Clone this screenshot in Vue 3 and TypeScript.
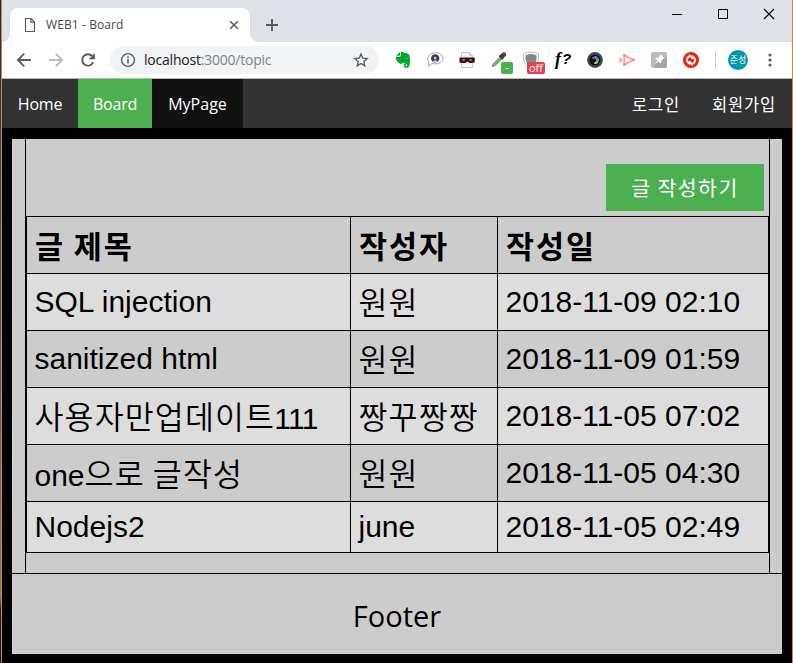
<script setup lang="ts">
interface Piece {
  text: string
  ko: boolean
}

interface Post {
  title: string
  author: string
  date: string
}

const headers: string[] = ['글 제목', '작성자', '작성일']

const posts: Post[] = [
  { title: 'SQL injection', author: '원원', date: '2018-11-09 02:10' },
  { title: 'sanitized html', author: '원원', date: '2018-11-09 01:59' },
  { title: '사용자만업데이트111', author: '짱꾸짱짱', date: '2018-11-05 07:02' },
  { title: 'one으로 글작성', author: '원원', date: '2018-11-05 04:30' },
  { title: 'Nodejs2', author: 'june', date: '2018-11-05 02:49' },
]

// Splits a string into Hangul and Latin runs so each can carry its own font metrics.
function pieces(text: string): Piece[] {
  const runs = text.match(/[가-힣]+(?: [가-힣]+)*|[^가-힣]+/g) ?? []
  return runs.map((run) => ({ text: run, ko: /[가-힣]/.test(run) }))
}

function hasHangul(post: Post): boolean {
  return /[가-힣]/.test(post.title + post.author)
}
</script>

<template>
  <div class="window">
    <div class="tabstrip">
      <div class="tab">
        <svg class="doc" width="12" height="16" viewBox="0 0 12 16">
          <path d="M1.5 1.5h5.6l3.4 3.4v9.6h-9z M6.8 1.5v3.7h3.7" fill="none" stroke="#5a5d61" stroke-width="1.2" />
        </svg>
        <span class="tab-title">WEB1 - Board</span>
        <svg class="tab-close" width="10" height="10" viewBox="0 0 10 10">
          <path d="M1.2 1.2l7.6 7.6M8.8 1.2L1.2 8.8" stroke="#5a5d61" stroke-width="1.6" />
        </svg>
      </div>
      <svg class="plus" width="12" height="12" viewBox="0 0 12 12">
        <path d="M6 0v12M0 6h12" stroke="#54575b" stroke-width="1.8" />
      </svg>
      <div class="controls">
        <svg width="12" height="12" viewBox="0 0 12 12"><path d="M1 6.5h10" stroke="#000" /></svg>
        <svg width="12" height="12" viewBox="0 0 12 12"><path d="M1.5 1.5h9v9h-9z" stroke="#000" fill="none" /></svg>
        <svg width="12" height="12" viewBox="0 0 12 12"><path d="M1 1l10 10M11 1L1 11" stroke="#000" stroke-width="1.1" /></svg>
      </div>
    </div>

    <div class="toolbar">
      <div class="nav-buttons">
        <svg width="16" height="16" viewBox="0 0 16 16">
          <path d="M15 8H2.2M8.2 1.7L1.9 8l6.3 6.3" fill="none" stroke="#5a5d61" stroke-width="1.9" />
        </svg>
        <svg width="16" height="16" viewBox="0 0 16 16">
          <path d="M1 8h12.8M7.8 1.7L14.1 8l-6.3 6.3" fill="none" stroke="#b9bbbe" stroke-width="1.9" />
        </svg>
        <svg width="16" height="16" viewBox="0 0 16 16">
          <path d="M13.2 10.2A5.7 5.7 0 1 1 12.3 4.2" fill="none" stroke="#5a5d61" stroke-width="1.9" />
          <path d="M14.9 1v6.2H8.7z" fill="#5a5d61" />
        </svg>
      </div>
      <div class="omnibox">
        <svg width="16" height="16" viewBox="0 0 16 16">
          <circle cx="8" cy="8" r="6.4" fill="none" stroke="#5f6368" stroke-width="1.4" />
          <path d="M8 7v4.4M8 4.3v1.6" stroke="#5f6368" stroke-width="1.6" />
        </svg>
        <span class="url">localhost<i>:3000/topic</i></span>
        <svg class="star" width="16" height="16" viewBox="0 0 16 16">
          <path d="M8 1.9l1.7 4.2 4.5.4-3.4 2.9 1 4.4L8 11.5l-3.8 2.3 1-4.4-3.4-2.9 4.5-.4z" fill="none" stroke="#54575b" stroke-width="1.3" />
        </svg>
      </div>

      <div class="extensions">
        <span class="ext">
          <svg width="16" height="18" viewBox="0 0 16 18">
            <path d="M1.200 4.800L5 1v3q0 .8-.8.800z" fill="#00a82d" />
            <path d="M5.800 1.200c2-.6 3.200.1 3.700.8l3.200.6c1.500.4 2.300 2.800 2.300 6.400 0 5-1 8-3.200 8-1.800 0-3-.8-3-2.500 0-1.500 1-2.300 2.700-2.300v1.500c-.8 0-1.200.3-1.200.8s.4.900 1.100.9c.9 0 1-2.400 0-2.700l-2.500-.6-.5-.9c-.6 1.600-1.700 1.900-3 1.500C2.500 11.900 1 9.500.8 5.800h3.800c.8 0 1.200-.5 1.200-1.200z" fill="#00a82d" />
            <path d="M11 7.500q1.100-1 1.800.3z" fill="#fff" />
          </svg>
        </span>
        <span class="ext">
          <svg width="18" height="18" viewBox="0 0 18 18">
            <path d="M9.300 1.700c4.200 0 7.600 2.500 7.600 5.600s-3.400 5.600-7.600 5.600c-1.200 0-2.300-.2-3.300-.6L2.300 15.400l.7-4.300C-.2 7.600 3 1.700 9.300 1.700z" fill="#fff" stroke="#a5a5a5" />
            <circle cx="9.200" cy="7.400" r="4.200" fill="#2c4a80" />
            <path d="M6.500 7.200q0-3.200 2.700-3.200t2.700 3.200l-.6 1.800H7.100z" fill="#4a2a2a" />
            <circle cx="9.200" cy="6.900" r="1.500" fill="#e8b9a8" />
            <path d="M6.800 10.600q2.400-2.800 4.800 0-2.400 1.700-4.800 0" fill="#b9cbe8" />
          </svg>
        </span>
        <span class="ext">
          <svg width="18" height="18" viewBox="0 0 18 18">
            <path d="M3.500 1.500h8l3.200 3.200v11.800H3.500z" fill="#f5f6f6" stroke="#c7c9c9" />
            <path d="M11.500 1.500v3.200h3.200" fill="none" stroke="#c7c9c9" />
            <path d="M1.500 6.500h15.200v4.700q-1 .9-5.200.8l-2-1.400-2 1.400q-4.600.4-6-.8z" fill="#3d0f10" />
            <path d="M4 9q1.600-1.300 3.200 0-1.600 1-3.200 0M11 9q1.600-1.300 3.200 0-1.600 1-3.200 0" fill="#d9c3be" />
          </svg>
        </span>
        <span class="ext">
          <svg width="18" height="18" viewBox="0 0 18 18">
            <path d="M2 15.500l1-2.600 6.700-6.700 2 2L5 14.800z" fill="#62c462" stroke="#848a86" />
            <path d="M8.500 5l1.600-1 2.700-2.600q3.700-.9 3.300 3.100L13.500 7l-.8 2.100z" fill="#353a3f" />
            <path d="M13 2.200l1.800 1.700" stroke="#7a8289" />
          </svg>
          <b class="badge green">-</b>
        </span>
        <span class="ext">
          <svg width="18" height="18" viewBox="0 0 18 18">
            <path d="M1.500 2.800q7.500-3.500 15 0v5q0 5.500-7.500 8.200-7.500-2.700-7.500-8.200z" fill="#fff" stroke="#b8b8b8" />
            <path d="M3.500 4.200q5.500-2.300 11 0v4.200q-.5 4-5.500 5.600-5-1.600-5.500-5.600z" fill="#85888a" />
          </svg>
          <b class="badge red">off</b>
        </span>
        <span class="ext fn"><em>f</em>?</span>
        <span class="ext">
          <svg width="18" height="18" viewBox="0 0 18 18">
            <circle cx="9" cy="9" r="7.900" fill="#3e454e" />
            <circle cx="9" cy="9" r="5.300" fill="#07090c" />
            <path d="M9 9L5.500 7.300A4 4 0 0 1 8.800 5z" fill="#af36d7" />
            <path d="M9 9L8.800 5a4 4 0 0 1 3.800 2z" fill="#368be8" />
            <path d="M9 9l3.600-2a4 4 0 0 1-.5 4.700z" fill="#14cdb0" />
            <path d="M9 9l3.100 2.700A4 4 0 0 1 8 12.900z" fill="#d9dc21" />
            <path d="M8 12.900a4 4 0 0 1-2.500-5.600L9 9z" fill="#1b1013" />
            <circle cx="8.600" cy="9.400" r="1.500" fill="#090909" />
          </svg>
        </span>
        <span class="ext">
          <svg width="18" height="18" viewBox="0 0 18 18">
            <path d="M1 6.900h3.500v4.300H1z" fill="#ffb4b4" />
            <path d="M6.400 4.200L15 9l-8.600 4.800z" fill="none" stroke="#fba0a0" stroke-width="1.900" />
            <path d="M5 3h2.600v3H5zM5 12h2.600v3H5zM13.600 7.600H17v2.700h-3.400z" fill="#ff8f8f" />
          </svg>
        </span>
        <span class="ext">
          <svg width="18" height="18" viewBox="0 0 18 18">
            <rect x="1" y="1" width="16" height="16" rx="2" fill="#bcbcbc" />
            <path d="M14 5l3 3v7q0 2-2 2H6l-2-3z" fill="#a5a5a5" />
            <path d="M10.600 3.200l4.200 4.200-1.300.3-2.300 2.100.1 2-.8.800-2.200-2.200-4.100 3.700L7.500 9.700 5.300 7.500l.8-.8 2.100.1 2.100-2.300z" fill="#fff" />
          </svg>
        </span>
        <span class="ext">
          <svg width="18" height="18" viewBox="0 0 18 18">
            <circle cx="9" cy="9" r="8" fill="#fa1d0b" />
            <path d="M8.200 13.200L5.600 10.900Q4.200 9 5.400 7L8 4.600l3 3.200" fill="none" stroke="#fff" stroke-width="2" />
            <path d="M9.800 4.800l2.600 2.300q1.400 1.900.2 3.900L10 13.400l-3-3.200" fill="none" stroke="#fff" stroke-width="2" />
          </svg>
        </span>
      </div>
      <span class="divider"></span>
      <span class="avatar">준성</span>
      <svg class="menu" width="4" height="14" viewBox="0 0 4 14">
        <circle cx="2" cy="2" r="1.600" fill="#5a5d61" />
        <circle cx="2" cy="7" r="1.600" fill="#5a5d61" />
        <circle cx="2" cy="12" r="1.600" fill="#5a5d61" />
      </svg>
    </div>

    <nav class="site-nav">
      <a class="home"><span>Home</span></a>
      <a class="board"><span>Board</span></a>
      <a class="mypage"><span>MyPage</span></a>
      <a class="login"><span>로그인</span></a>
      <a class="join"><span>회원가입</span></a>
    </nav>

    <div class="frame">
      <main class="content">
        <div class="actions">
          <button class="write">글 작성하기</button>
        </div>
        <table>
          <colgroup>
            <col class="c1" />
            <col class="c2" />
            <col class="c3" />
          </colgroup>
          <thead>
            <tr>
              <th v-for="h in headers" :key="h">{{ h }}</th>
            </tr>
          </thead>
          <tbody>
            <tr v-for="post in posts" :key="post.date" :class="{ short: !hasHangul(post) }">
              <td v-for="cell in [post.title, post.author, post.date]" :key="cell">
                <div class="cell" :class="{ low: /[가-힣]/.test(cell) }">
                  <span v-for="(p, i) in pieces(cell)" :key="i" :class="p.ko ? 'ko' : 'la'">{{ p.text }}</span>
                </div>
              </td>
            </tr>
          </tbody>
        </table>
      </main>
      <footer class="footer"><span>Footer</span></footer>
    </div>
  </div>
</template>

<style>
body {
  margin: 0;
  overflow: hidden;
}
</style>

<style scoped>
* {
  box-sizing: border-box;
}

svg {
  display: block;
  flex: none;
}

.window {
  width: 793px;
  height: 663px;
  display: flex;
  flex-direction: column;
  padding-left: 2px;
  border-right: 1px solid #c1854e;
  background:
    linear-gradient(#c1854e, #c1854e) 1px 0 / 1px 100% no-repeat,
    linear-gradient(#26283f, #4a4a63 35%, #6b5f68 65%, #a07555 90%, #2a1d14 92%, #161a14) 0 0 / 1px 100% no-repeat,
    #000;
  font-family: "Open Sans", "Noto Sans CJK KR", sans-serif;
}

.tabstrip {
  height: 42px;
  flex: none;
  display: flex;
  background: #dee1e6;
  padding-left: 8px;
}

.tab {
  position: relative;
  width: 240px;
  height: 34px;
  margin-top: 8px;
  padding: 0 11px 0 14px;
  border-radius: 8px 8px 0 0;
  background: #fff;
  display: flex;
  align-items: center;
}

.tab::before,
.tab::after {
  content: "";
  position: absolute;
  bottom: 0;
  width: 8px;
  height: 8px;
}

.tab::before {
  left: -8px;
  background: radial-gradient(circle at 0 0, transparent 7.5px, #fff 8px);
}

.tab::after {
  right: -8px;
  background: radial-gradient(circle at 100% 0, transparent 7.5px, #fff 8px);
}

.tab-title {
  margin-left: 10px;
  font-size: 12px;
  line-height: 16px;
  letter-spacing: 0.1px;
  color: #45484c;
  white-space: nowrap;
}

.tab-close {
  margin-left: auto;
}

.plus {
  margin: 19px 0 0 16px;
}

.controls {
  margin: 8px 17px 0 auto;
  display: flex;
  gap: 34px;
}

.toolbar {
  height: 37px;
  flex: none;
  background: #fff;
  border-bottom: 1px solid #b6b4b6;
  display: flex;
  align-items: center;
  padding-left: 14px;
}

.nav-buttons {
  display: flex;
  gap: 16px;
}

.omnibox {
  width: 269px;
  height: 28px;
  margin-left: 14px;
  padding: 0 10px;
  border-radius: 14px;
  background: #f1f3f4;
  display: flex;
  align-items: center;
}

.url {
  margin-left: 8px;
  font-size: 14px;
  line-height: 20px;
  letter-spacing: -0.22px;
  color: #202124;
  white-space: nowrap;
}

.url i {
  font-style: normal;
  color: #80868b;
}

.star {
  margin-left: auto;
}

.extensions {
  display: flex;
  margin-left: 8px;
}

.ext {
  position: relative;
  width: 32px;
  height: 28px;
  display: flex;
  align-items: center;
  justify-content: center;
}

.badge {
  position: absolute;
  border-radius: 2px;
  color: #fff;
  font-weight: 400;
  font-size: 10px;
  line-height: 12px;
  text-align: center;
}

.green {
  left: 18px;
  top: 16px;
  width: 12px;
  height: 12px;
  background: #4caf50;
  line-height: 10px;
}

.red {
  left: 12px;
  top: 16px;
  width: 18px;
  height: 12px;
  background: #e6404f;
  font-size: 11px;
  line-height: 11px;
}

.fn {
  font: italic bold 15px/20px "Liberation Sans", sans-serif;
  color: #000;
  padding-bottom: 2px;
}

.fn em {
  font-family: "Liberation Serif", serif;
  font-size: 18px;
  margin-right: 1px;
}

.divider {
  width: 1px;
  height: 16px;
  margin-left: 8px;
  background: #ccc;
}

.avatar {
  width: 20px;
  height: 20px;
  margin-left: 12px;
  border-radius: 50%;
  background: #0097a7;
  color: #fff;
  font-size: 9px;
  line-height: 19px;
  text-align: center;
  white-space: nowrap;
}

.menu {
  margin-left: 20px;
}

.site-nav {
  height: 49px;
  flex: none;
  display: flex;
  background: #333;
  color: #fff;
  font-size: 16px;
  line-height: 24px;
}

.site-nav a {
  display: flex;
  align-items: center;
  justify-content: center;
  white-space: nowrap;
}

.home {
  width: 76px;
}

.board {
  width: 74px;
  background: #4caf50;
}

.home,
.board {
  letter-spacing: -0.2px;
}

.mypage {
  width: 91px;
  background: #111;
}

.login {
  width: 80px;
  margin-left: auto;
}

.join {
  width: 96px;
}

.login,
.join {
  font-family: "Noto Sans CJK KR", sans-serif;
  font-size: 16.5px;
  letter-spacing: 0.8px;
}

.frame {
  height: 515px;
  margin: 11px 10px 0;
  flex: none;
  display: flex;
  flex-direction: column;
  background: #ccc;
}

.content {
  height: 434px;
  margin: 0 12px 0 13px;
  border: solid #000;
  border-width: 0 1px;
}

.actions {
  display: flex;
  justify-content: flex-end;
  padding: 25px 5px 5px 0;
}

.write {
  width: 158px;
  height: 47px;
  padding: 0 0 1px;
  border: 0;
  background: #4caf50;
  color: #fff;
  font-family: "Noto Sans CJK KR", sans-serif;
  font-size: 20.5px;
  letter-spacing: 1.4px;
}

table {
  width: 743px;
  table-layout: fixed;
  border-collapse: collapse;
  color: #000;
}

.c1 {
  width: 324px;
}

.c2 {
  width: 147px;
}

.c3 {
  width: 271px;
}

tr {
  height: 57px;
}

tr.short {
  height: 51px;
}

th,
td {
  padding: 0 8px 0 7.5px;
  border: 1px solid #000;
  text-align: left;
  white-space: nowrap;
}

th {
  padding-bottom: 1px;
  padding-left: 8px;
  font: 700 30.5px/40px "Noto Sans CJK KR", sans-serif;
  letter-spacing: 1.9px;
}

tbody tr:nth-child(odd) {
  background: #ddd;
}

.cell {
  font: 30px/34px "Liberation Sans", sans-serif;
  height: 34px;
}

.ko {
  font-family: "Noto Sans CJK KR", sans-serif;
  font-size: 31.5px;
  line-height: 0;
  font-weight: 350;
  letter-spacing: 1.1px;
}

.ko + .la {
  margin-left: -1px;
  letter-spacing: -0.6px;
}

.low {
  position: relative;
  top: 3px;
}

.footer {
  flex: 1;
  border-top: 1px solid #000;
  padding-top: 4px;
  display: flex;
  align-items: center;
  justify-content: center;
  font-size: 29px;
  line-height: 40px;
}
</style>
